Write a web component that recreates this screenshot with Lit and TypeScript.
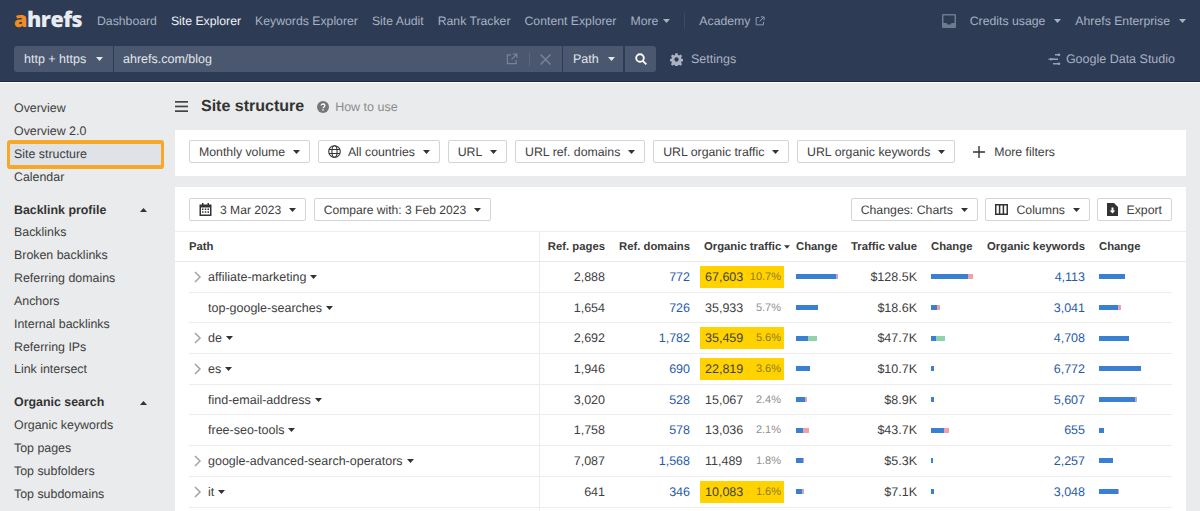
import { LitElement, html, css, svg } from "lit";
import { customElement } from "lit/decorators.js";

type Bar = [number, number, string?];
interface Row {
  name: string; exp: boolean; pages: string; domains: string; traffic: string; pct: string; hi: boolean;
  b1: Bar; value: string; b2: Bar; kw: string; b3: Bar;
}

const rows: Row[] = [
  { name: "affiliate-marketing", exp: true, pages: "2,888", domains: "772", traffic: "67,603", pct: "10.7%", hi: true, b1: [40, 2, "f"], value: "$128.5K", b2: [37, 5, "r"], kw: "4,113", b3: [26, 0] },
  { name: "top-google-searches", exp: false, pages: "1,654", domains: "726", traffic: "35,933", pct: "5.7%", hi: false, b1: [22, 0], value: "$18.6K", b2: [6, 3, "r"], kw: "3,041", b3: [19, 3, "r"] },
  { name: "de", exp: true, pages: "2,692", domains: "1,782", traffic: "35,459", pct: "5.6%", hi: true, b1: [12, 9, "g"], value: "$47.7K", b2: [5, 9, "g"], kw: "4,708", b3: [30, 0] },
  { name: "es", exp: true, pages: "1,946", domains: "690", traffic: "22,819", pct: "3.6%", hi: true, b1: [14, 0], value: "$10.7K", b2: [3, 0], kw: "6,772", b3: [42, 0] },
  { name: "find-email-address", exp: false, pages: "3,020", domains: "528", traffic: "15,067", pct: "2.4%", hi: false, b1: [9, 2, "r"], value: "$8.9K", b2: [3, 0], kw: "5,607", b3: [36, 2, "f"] },
  { name: "free-seo-tools", exp: false, pages: "1,758", domains: "578", traffic: "13,036", pct: "2.1%", hi: false, b1: [7, 6, "r"], value: "$43.7K", b2: [13, 5, "r"], kw: "655", b3: [5, 0] },
  { name: "google-advanced-search-operators", exp: true, pages: "7,087", domains: "1,568", traffic: "11,489", pct: "1.8%", hi: false, b1: [7, 1, "f"], value: "$5.3K", b2: [2, 0], kw: "2,257", b3: [14, 0] },
  { name: "it", exp: true, pages: "641", domains: "346", traffic: "10,083", pct: "1.6%", hi: true, b1: [6, 2, "f"], value: "$7.1K", b2: [3, 0], kw: "3,048", b3: [19, 1, "f"] },
];

const side1 = ["Backlinks", "Broken backlinks", "Referring domains", "Anchors", "Internal backlinks", "Referring IPs", "Link intersect"];
const side2 = ["Organic keywords", "Top pages", "Top subfolders", "Top subdomains"];

const caret = html`<svg class="caret" width="7" height="4" viewBox="0 0 7 4"><path d="M0 0h7L3.500 4z" fill="currentColor"/></svg>`;
const extIcon = html`<svg width="13" height="13" viewBox="0 0 13 13" fill="none" stroke="currentColor" stroke-width="1.300"><path d="M5.500 2H1.500v9.500H11V7.500M7.500 1.200h4.300v4.300M11.500 1.500L6 7"/></svg>`;
const caretUp = svg`<svg width="7" height="4" viewBox="0 0 7 4"><path d="M0 4h7L3.500 0z" fill="#333"/></svg>`;

@customElement("app-root")
export class AppRoot extends LitElement {
  static styles = css`
    :host { display: block; width: 1200px; height: 511px; overflow: hidden; background: #e9ebec; font-family: "Liberation Sans", Arial, sans-serif; font-size: 12.500px; color: #404040; text-rendering: geometricPrecision; }
    .caret { flex: none; }
    .top { height: 82px; background: #2d3b55; border-bottom: 1px solid #fff; box-shadow: inset 0 -1px 0 #1f2a3f; color: #a9b2c2; display: flex; flex-direction: column; }
    .nav { height: 46px; box-sizing: border-box; display: flex; align-items: center; padding: 0 14px 4px 14px; font-size: 12.250px; }
    .logo { font-family: "Open Sans", sans-serif; font-weight: 800; font-size: 21.500px; letter-spacing: -0.5px; color: #e8ebf0; width: 83px; flex: none; line-height: 24px; margin-top: -2px; }
    .logo b { color: #f58a1f; font-weight: 800; }
    .links { display: flex; align-items: center; gap: 14px; }
    .links .on { color: #f1f3f6; }
    .more { display: inline-flex; align-items: center; gap: 5px; }
    .vline { width: 1px; height: 16px; background: #3d4a63; }
    .acad { display: inline-flex; align-items: center; gap: 5px; }
    .acad svg { color: #8f99ac; width: 10px; height: 10px; }
    .right { margin-left: auto; display: flex; align-items: center; }
    .inbox { margin-right: 14px; display: block; }
    .right .more { gap: 9px; }
    .right .credits { margin-right: 14px; }
    .search { display: flex; height: 26px; padding: 0 25px 0 14px; align-items: center; }
    .seg { background: #4a576f; height: 26px; display: flex; align-items: center; color: #e3e6eb; flex: none; }
    .proto { width: 99px; padding-left: 10px; gap: 10px; border-radius: 3px 0 0 3px; box-sizing: border-box; }
    .url { width: 448px; margin-left: 1px; padding: 0 11px 0 9px; box-sizing: border-box; }
    .url span { flex: 1; }
    .url .ic { color: #77839a; display: flex; }
    .url .ic.e svg { width: 12px; height: 12px; }
    .url .sep { width: 1px; height: 13px; background: #5b6880; margin: 0 10px 0 11px; }
    .path { width: 60px; margin-left: 1px; padding-left: 10px; gap: 9px; box-sizing: border-box; }
    .go { width: 31px; margin-left: 2px; justify-content: center; border-radius: 0 3px 3px 0; }
    .settings { display: flex; align-items: center; gap: 8px; margin-left: 14px; color: #a9b2c2; }
    .gds { margin-left: auto; display: flex; align-items: center; gap: 5px; }
    .body { display: flex; height: 428px; }
    .side { width: 175px; flex: none; padding-top: 14.200px; box-sizing: border-box; line-height: 22.850px; font-size: 12.400px; }
    .si { padding-left: 14px; }
    .si.sel { margin-left: 10px; width: 151px; padding-left: 4px; box-sizing: border-box; background: #dfe2e6; box-shadow: 0 0 0 3px #f7a829, inset 0 1px 0 #f7a829, inset 0 -1px 0 #f7a829; border-radius: 1px; }
    .sh { padding: 0 14px; margin-top: 10px; font-weight: 700; color: #333; display: flex; justify-content: space-between; align-items: center; width: 161px; box-sizing: border-box; }
    .main { width: 1011px; flex: none; display: flex; flex-direction: column; }
    .title { height: 47px; display: flex; align-items: center; flex: none; }
    .title h1 { font-size: 16px; font-weight: 700; margin: 0 0 0 13px; color: #333; line-height: 20px; }
    .help { margin-left: 13px; display: flex; align-items: center; gap: 6px; color: #8c8c8c; }
    .card { background: #fff; }
    .filters { height: 46px; display: flex; align-items: center; padding: 0 14px 3px; box-sizing: border-box; gap: 7.800px; margin-bottom: 11px; flex: none; }
    .btn { height: 23px; border: 1px solid #d3d5d8; border-radius: 2px; box-sizing: border-box; display: flex; align-items: center; padding: 0 9px; flex: none; background: #fff; color: #404040; gap: 8px; white-space: nowrap; font-size: 12.300px; }
    .btn .caret { color: #333; }
    .btn.glob { gap: 7px; }
    .btn.glob .caret { margin-left: 1px; }
    .btn.d { font-size: 12.100px; }
    .moref { display: flex; align-items: center; gap: 9px; margin-left: 10px; font-size: 12.300px; }
    .table { flex: 1; display: flex; flex-direction: column; }
    .tools { height: 45px; flex: none; display: flex; align-items: center; padding: 1px 14px 0; box-sizing: border-box; gap: 7.500px; border-bottom: 1px solid #eeeeee; }
    .tools .sp { flex: 1; }
    .g { display: grid; grid-template-columns: 351px 65px 85px 94px 54px 79px 56px 112px 87px; margin-left: 14px; width: 983px; align-items: center; flex: none; }
    .hd { height: 29px; font-weight: 700; font-size: 11.300px; color: #3a3a3a; margin-left: 0; padding-left: 14px; width: 997px; border-bottom: 1px solid #e8e8e8; box-sizing: content-box; }
    .r { text-align: right; }
    .pc { height: 100%; display: flex; align-items: center; border-right: 1px solid #ececec; box-sizing: border-box; }
    .ch { padding-left: 12px; }
    .ch2 { padding-left: 14px; }
    .traf-h { display: flex; align-items: center; gap: 3px; padding-left: 14px; white-space: nowrap; }
    .traf-h .caret { width: 6px; }
    .row { height: 30.700px; border-bottom: 1px solid #ececec; box-sizing: border-box; }
    .fill { flex: 1; align-items: stretch; }
    .chev { width: 19px; flex: none; display: flex; padding-left: 4px; box-sizing: border-box; }
    .nm { margin-left: 19px; }
    .chev + .nm { margin-left: 0; }
    .nm-caret { margin-left: 4px; display: flex; color: #333; }
    a { color: #1f5ba8; text-decoration: none; }
    .tc { margin-left: 10px; height: 22px; display: flex; align-items: center; justify-content: space-between; padding: 0 3px 0 5px; }
    .tc.hi { background: #ffd200; }
    .pct { font-size: 11px; color: #8f8f8f; }
    .hi .pct { color: #8f7d1c; }
    .bar { display: flex; height: 5px; }
    .bar i { display: block; height: 5px; }
    .bar .b { background: #3a80d2; }
    .bar .x-r { background: #f2a0a8; }
    .bar .x-g { background: #8fd3ac; }
    .bar .x-f { background: #c9a5c9; }
  `;

  bar(b: Bar) {
    return html`<div class="bar"><i class="b" style="width:${b[0]}px"></i>${b[1] ? html`<i class="x-${b[2]}" style="width:${b[1]}px"></i>` : ""}</div>`;
  }

  btn(label: string, icon?: unknown, cls = "") {
    return html`<div class="btn ${cls}">${icon ?? ""}<span>${label}</span>${caret}</div>`;
  }

  render() {
    const gear = html`<svg width="13" height="13" viewBox="0 0 24 24" fill="#a9b2c2"><path fill-rule="evenodd" d="M10 .5h4l.7 3.300 1.900.8 2.900-1.800 2.800 2.800-1.800 2.900.8 1.900 3.200.7v4l-3.200.7-.8 1.900 1.800 2.900-2.800 2.800-2.900-1.800-1.900.8-.7 3.200h-4l-.7-3.200-1.900-.8-2.900 1.800-2.800-2.800 1.800-2.900-.8-1.900-3.200-.7v-4l3.200-.7.8-1.900-1.800-2.900 2.800-2.800 2.900 1.800 1.900-.8zM12 8a4 4 0 100 8 4 4 0 000-8z"/></svg>`;
    const calendar = html`<svg width="13" height="13" viewBox="0 0 13 13"><path d="M3 0h1.500v1.500h4V0H10v1.500h2.500V13H.5V1.500H3z" fill="#333"/><path d="M2 4.500h9V11.500H2z" fill="#fff"/><path d="M3 5.500h1.500V7H3zM5.800 5.500h1.500V7H5.800zM8.500 5.500H10V7H8.500zM3 8.300h1.500v1.500H3zM5.800 8.300h1.500v1.500H5.800zM8.500 8.300H10v1.500H8.500z" fill="#333"/></svg>`;
    const columns = html`<svg width="13" height="11" viewBox="0 0 13 11" fill="none" stroke="#333" stroke-width="1.500"><rect x=".75" y=".75" width="11.500" height="9.500"/><path d="M4.600 1v9M8.400 1v9"/></svg>`;
    const exportI = html`<svg width="11" height="13" viewBox="0 0 11 13"><path d="M0 0h7l4 4v9H0z" fill="#333"/><path d="M4.500 4.500h2v3H8.300L5.500 10.500 2.700 7.500h1.800z" fill="#fff"/></svg>`;
    const globe = html`<svg width="13" height="13" viewBox="0 0 13 13" fill="none" stroke="#333" stroke-width="1.100"><circle cx="6.500" cy="6.500" r="5.800"/><ellipse cx="6.500" cy="6.500" rx="2.600" ry="5.800"/><path d="M1 4.500h11M1 8.500h11"/></svg>`;
    const chev = html`<svg width="9" height="12" viewBox="0 0 9 12" fill="none" stroke="#a3a3a3" stroke-width="1.500"><path d="M2 1l5 5-5 5"/></svg>`;
    return html`
      <div class="top">
        <div class="nav">
          <div class="logo"><b>a</b>hrefs</div>
          <div class="links">
            <span>Dashboard</span><span class="on">Site Explorer</span><span>Keywords Explorer</span><span>Site Audit</span><span>Rank Tracker</span><span>Content Explorer</span>
            <span class="more">More ${caret}</span>
            <span class="vline"></span>
            <span class="acad">Academy ${extIcon}</span>
          </div>
          <div class="right">
            <svg class="inbox" width="14" height="14" viewBox="0 0 14 14"><path d="M0 1a1 1 0 011-1h12a1 1 0 011 1v12a1 1 0 01-1 1H1a1 1 0 01-1-1z" fill="#6f7a8f"/><path d="M1.500 1.500h11V9H9.500L8.500 10.500h-3L4.500 9h-3z" fill="#2d3b55"/></svg>
            <span class="more credits">Credits usage ${caret}</span>
            <span class="more">Ahrefs Enterprise ${caret}</span>
          </div>
        </div>
        <div class="search">
          <div class="seg proto"><span>http + https</span>${caret}</div>
          <div class="seg url"><span>ahrefs.com/blog</span>
            <div class="ic e">${extIcon}</div><div class="sep"></div>
            <div class="ic"><svg width="11" height="11" viewBox="0 0 11 11" fill="none" stroke="currentColor" stroke-width="1.500"><path d="M.5.500l10 10M10.500.500l-10 10"/></svg></div>
          </div>
          <div class="seg path"><span>Path</span>${caret}</div>
          <div class="seg go"><svg width="12" height="12" viewBox="0 0 12 12" fill="none" stroke="#fff" stroke-width="1.900"><circle cx="5" cy="5" r="3.800"/><path d="M7.800 7.800L11.300 11.300"/></svg></div>
          <div class="settings">${gear}<span>Settings</span></div>
          <div class="gds"><svg width="13" height="13" viewBox="0 0 13 13" fill="#98a2b4"><rect x="0" y="5.500" width="7" height="1.500" opacity=".5"/><rect x="7" y="1" width="5" height="1.500"/><rect x="4" y="5.500" width="6" height="1.500"/><rect x="5" y="10" width="6" height="1.500"/><circle cx="11" cy="1.700" r="1.300"/><circle cx="3" cy="6.200" r="1.300"/><circle cx="11" cy="10.700" r="1.300"/></svg><span>Google Data Studio</span></div>
        </div>
      </div>
      <div class="body">
        <div class="side">
          <div class="si">Overview</div><div class="si">Overview 2.0</div>
          <div class="si sel">Site structure</div><div class="si">Calendar</div>
          <div class="sh"><span>Backlink profile</span>${caretUp}</div>
          ${side1.map((s) => html`<div class="si">${s}</div>`)}
          <div class="sh"><span>Organic search</span>${caretUp}</div>
          ${side2.map((s) => html`<div class="si">${s}</div>`)}
        </div>
        <div class="main">
          <div class="title">
            <svg width="13" height="11" viewBox="0 0 13 11" fill="#444"><rect width="13" height="1.700"/><rect y="4.600" width="13" height="1.700"/><rect y="9.300" width="13" height="1.700"/></svg>
            <h1>Site structure</h1>
            <div class="help"><svg width="12" height="12" viewBox="0 0 12 12"><circle cx="6" cy="6" r="6" fill="#777"/><path d="M4.200 4.600C4.200 3.500 5 3 6 3s1.900.6 1.900 1.600C7.900 6 6 6 6 7.300" fill="none" stroke="#fff" stroke-width="1.300"/><rect x="5.300" y="8.200" width="1.400" height="1.400" fill="#fff"/></svg><span>How to use</span></div>
          </div>
          <div class="card filters">
            ${this.btn("Monthly volume")}
            ${this.btn("All countries", globe, "glob")}
            ${this.btn("URL")}${this.btn("URL ref. domains")}${this.btn("URL organic traffic")}${this.btn("URL organic keywords")}
            <div class="moref"><svg width="12" height="12" viewBox="0 0 12 12" fill="none" stroke="#333" stroke-width="1.400"><path d="M6 0v12M0 6h12"/></svg><span>More filters</span></div>
          </div>
          <div class="card table">
            <div class="tools">
              ${this.btn("3 Mar 2023", calendar, "d")}
              ${this.btn("Compare with: 3 Feb 2023", undefined, "d")}
              <div class="sp"></div>
              ${this.btn("Changes: Charts")}
              ${this.btn("Columns", columns)}
              <div class="btn">${exportI}<span>Export</span></div>
            </div>
            <div class="g hd">
              <div class="pc">Path</div>
              <div class="r">Ref. pages</div><div class="r">Ref. domains</div>
              <div class="traf-h">Organic traffic ${caret}</div>
              <div class="ch">Change</div><div class="r">Traffic value</div><div class="ch2">Change</div>
              <div class="r">Organic keywords</div><div class="ch2">Change</div>
            </div>
            ${rows.map((r) => html`
              <div class="g row">
                <div class="pc">
                  ${r.exp ? html`<div class="chev">${chev}</div>` : ""}
                  <span class="nm">${r.name}</span><span class="nm-caret">${caret}</span>
                </div>
                <div class="r">${r.pages}</div>
                <div class="r"><a>${r.domains}</a></div>
                <div class="tc ${r.hi ? "hi" : ""}"><span>${r.traffic}</span><span class="pct">${r.pct}</span></div>
                <div class="ch">${this.bar(r.b1)}</div>
                <div class="r">${r.value}</div>
                <div class="ch2">${this.bar(r.b2)}</div>
                <div class="r"><a>${r.kw}</a></div>
                <div class="ch2">${this.bar(r.b3)}</div>
              </div>`)}
            <div class="g fill"><div class="pc"></div></div>
          </div>
        </div>
      </div>
    `;
  }
}
